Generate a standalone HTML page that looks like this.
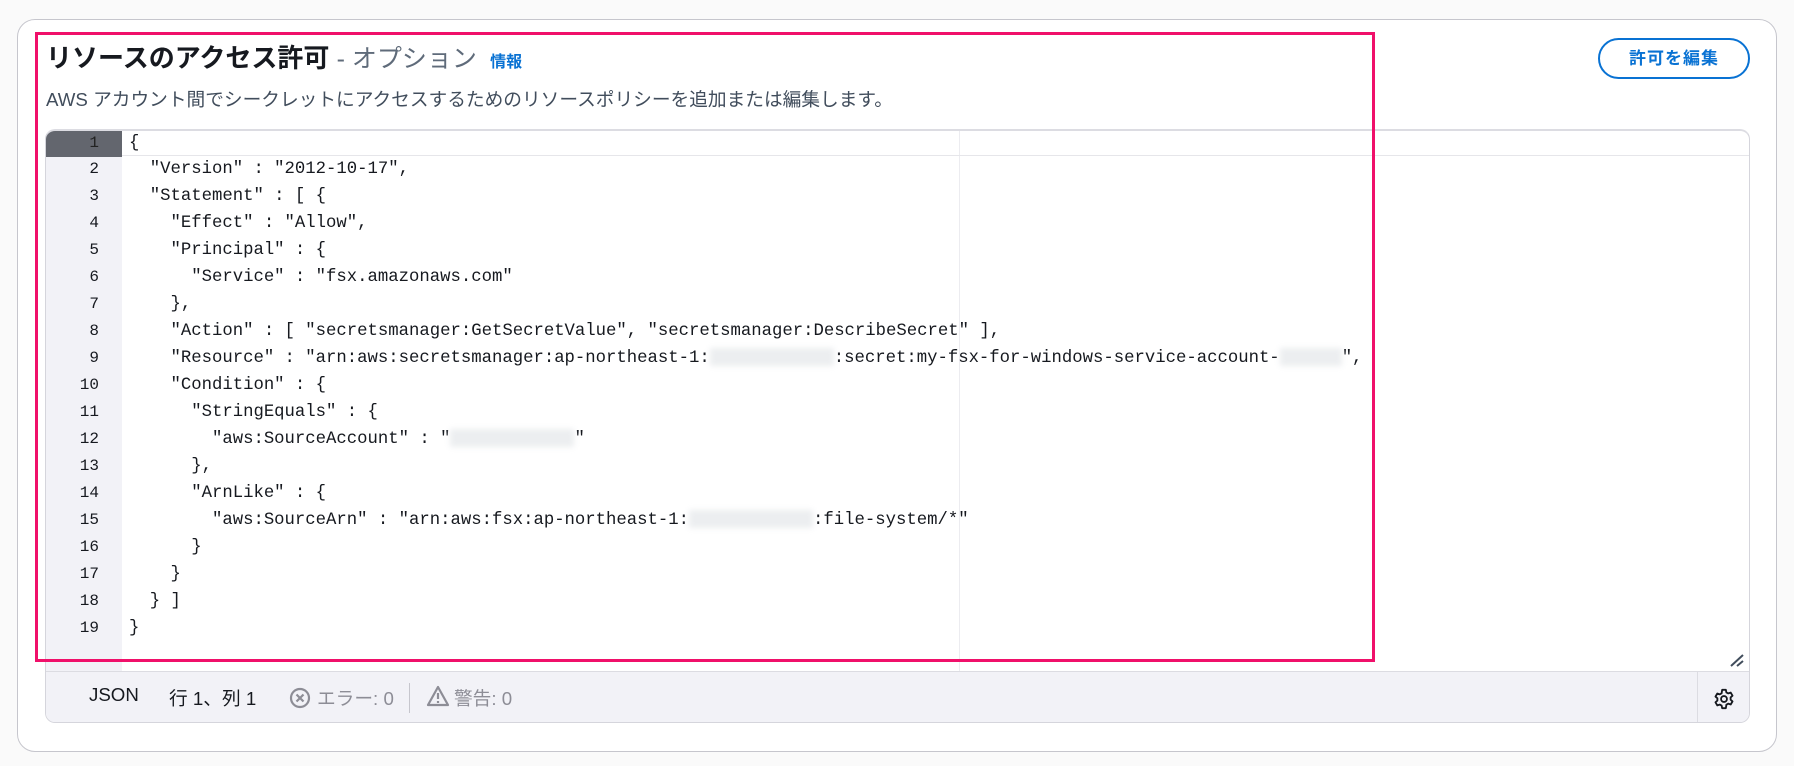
<!DOCTYPE html>
<html><head><meta charset="utf-8"><style>
*{box-sizing:border-box;margin:0;padding:0}
body{width:1794px;height:766px;background:#fafafa;font-family:"Liberation Sans","Noto Sans CJK JP",sans-serif;position:relative;overflow:hidden}
.card{position:absolute;left:17px;top:19px;width:1760px;height:733px;background:#fff;border:1px solid #c6c6cd;border-radius:18px}
.pink{position:absolute;left:35px;top:32px;width:1340px;height:630px;border:3px solid #f0106a;z-index:5}
.title{position:absolute;left:46px;top:38px;font-size:26px;font-weight:bold;color:#16191f;white-space:nowrap}
.title .opt{font-weight:normal;color:#5f6b7a;font-size:25px}
.title .info{font-size:16px;color:#0972d3;font-weight:bold;margin-left:6px}
.desc{position:absolute;left:46px;top:85px;font-size:18.7px;color:#414d5c;white-space:nowrap}
.btn{position:absolute;left:1598px;top:38px;width:152px;height:41px;border:2px solid #0972d3;border-radius:21px;color:#0972d3;font-weight:bold;font-size:17px;text-align:center;line-height:37px;letter-spacing:1px}
.ed{position:absolute;left:45px;top:129px;width:1705px;height:594px;border:1px solid #d5d5dc;border-top:2px solid #dcdce2;border-radius:10px;overflow:hidden;background:#fff}
.gut{position:absolute;left:0;top:0;width:76px;height:540px;background:#f2f2f7}
.lines{position:absolute;left:0;top:-2px;width:100%;font-family:"Liberation Mono",monospace;font-size:17.3px;color:#16191f}
.l{height:27px;line-height:27px;white-space:pre;position:relative}
.l .n{display:inline-block;width:76px;text-align:right;padding-right:23px;color:#16191f;font-size:16px}
.l .c{position:absolute;left:83px;top:0}
.l1{border-top:1px solid #e6e6ea;border-bottom:1px solid #e6e6ea}
.l1 .n{background:#63666e;color:#222}
.b{display:inline-block;width:124px;height:18px;vertical-align:middle;background:#eceef0;filter:blur(3px)}
.pm{position:absolute;left:913px;top:0;width:1px;height:540px;background:#ececf0}
.sb{position:absolute;left:0;top:540px;width:100%;height:54px;background:#f2f2f7;border-top:1px solid #dcdce2;font-size:18.7px;color:#16191f}
.sb span{position:absolute;top:12px;white-space:nowrap}
.g{color:#8d8d96}
</style></head><body>
<div class="card"></div>
<div class="pink"></div>
<div class="title">リソースのアクセス許可 <span class="opt">- オプション</span> <span class="info">情報</span></div>
<div class="desc">AWS アカウント間でシークレットにアクセスするためのリソースポリシーを追加または編集します。</div>
<div class="btn">許可を編集</div>
<div class="ed">
<div class="gut"></div>
<div class="pm"></div>
<div class="lines">
<div class="l l1"><span class="n">1</span><span class="c">{</span></div>
<div class="l"><span class="n">2</span><span class="c">  "Version" : "2012-10-17",</span></div>
<div class="l"><span class="n">3</span><span class="c">  "Statement" : [ {</span></div>
<div class="l"><span class="n">4</span><span class="c">    "Effect" : "Allow",</span></div>
<div class="l"><span class="n">5</span><span class="c">    "Principal" : {</span></div>
<div class="l"><span class="n">6</span><span class="c">      "Service" : "fsx.amazonaws.com"</span></div>
<div class="l"><span class="n">7</span><span class="c">    },</span></div>
<div class="l"><span class="n">8</span><span class="c">    "Action" : [ "secretsmanager:GetSecretValue", "secretsmanager:DescribeSecret" ],</span></div>
<div class="l"><span class="n">9</span><span class="c">    "Resource" : "arn:aws:secretsmanager:ap-northeast-1:<span class="b"></span>:secret:my-fsx-for-windows-service-account-<span class="b" style="width:62px"></span>",</span></div>
<div class="l"><span class="n">10</span><span class="c">    "Condition" : {</span></div>
<div class="l"><span class="n">11</span><span class="c">      "StringEquals" : {</span></div>
<div class="l"><span class="n">12</span><span class="c">        "aws:SourceAccount" : "<span class="b"></span>"</span></div>
<div class="l"><span class="n">13</span><span class="c">      },</span></div>
<div class="l"><span class="n">14</span><span class="c">      "ArnLike" : {</span></div>
<div class="l"><span class="n">15</span><span class="c">        "aws:SourceArn" : "arn:aws:fsx:ap-northeast-1:<span class="b"></span>:file-system/*"</span></div>
<div class="l"><span class="n">16</span><span class="c">      }</span></div>
<div class="l"><span class="n">17</span><span class="c">    }</span></div>
<div class="l"><span class="n">18</span><span class="c">  } ]</span></div>
<div class="l"><span class="n">19</span><span class="c">}</span></div>
</div>
<svg style="position:absolute;left:1683px;top:522px" width="16" height="14"><path d="M2 13L14 2M8 13L14 8" stroke="#414d5c" stroke-width="2"/></svg>
<div class="sb">
<span style="left:43px">JSON</span>
<span style="left:123px">行 1、列 1</span>
<svg style="position:absolute;left:243px;top:15px" width="22" height="22"><circle cx="11" cy="11" r="9" fill="none" stroke="#8d8d96" stroke-width="2.2"/><path d="M7.5 7.5L14.5 14.5M14.5 7.5L7.5 14.5" stroke="#8d8d96" stroke-width="2.2"/></svg>
<span class="g" style="left:271px">エラー: 0</span>
<div style="position:absolute;left:363px;top:11px;width:1px;height:30px;background:#c6c6cd"></div>
<svg style="position:absolute;left:380px;top:13px" width="24" height="22"><path d="M12 2L22 20H2Z" fill="none" stroke="#8d8d96" stroke-width="2.2" stroke-linejoin="round"/><path d="M12 8V14M12 16V18" stroke="#8d8d96" stroke-width="2.2"/></svg>
<span class="g" style="left:408px">警告: 0</span>
<div style="position:absolute;left:1651px;top:0;width:1px;height:54px;background:#dcdce2"></div>
<svg style="position:absolute;left:1667px;top:16px" width="22" height="22" viewBox="0 0 24 24"><path d="M10 2h4l.6 2.8 2 1.1 2.7-.9 2 3.4-2.1 1.9v2.4l2.1 1.9-2 3.4-2.7-.9-2 1.1L14 22h-4l-.6-2.8-2-1.1-2.7.9-2-3.4 2.1-1.9V11.3L2.7 9.4l2-3.4 2.7.9 2-1.1Z" fill="none" stroke="#16191f" stroke-width="2" stroke-linejoin="round"/><circle cx="12" cy="12" r="3.2" fill="none" stroke="#16191f" stroke-width="2"/></svg>
</div>
</div>
</body></html>
